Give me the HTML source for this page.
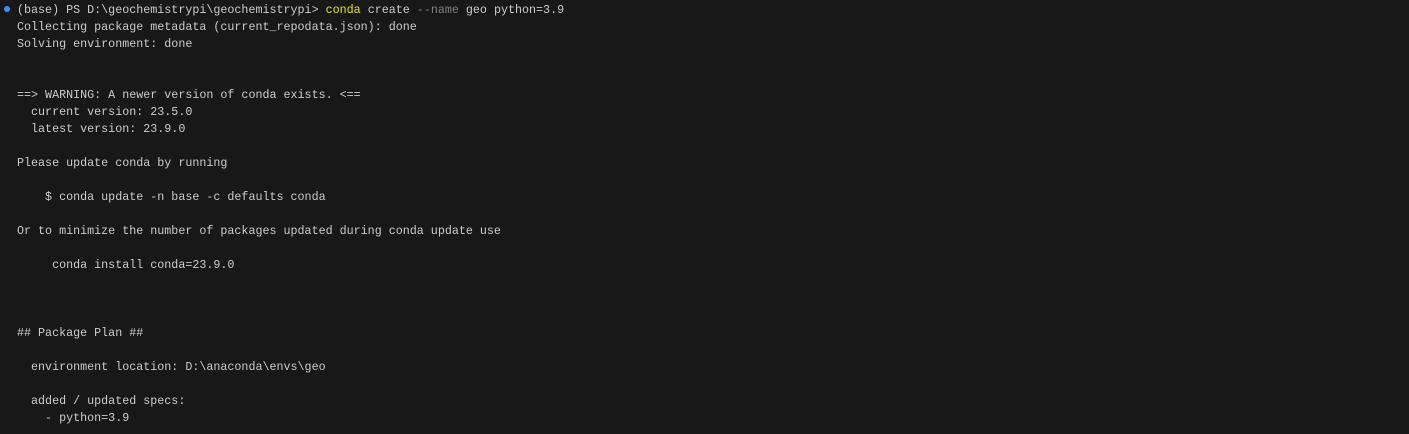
<!DOCTYPE html>
<html><head><style>
html,body{margin:0;padding:0;background:#181818;width:1409px;height:434px;overflow:hidden}
pre{margin:0;position:absolute;left:17px;top:2px;font-family:"Liberation Mono",monospace;font-size:11.7px;line-height:17px;color:#cccccc;white-space:pre}
.y{color:#e5e510}.d{color:#7f7f7f}
.dot{position:absolute;left:4px;top:6px;width:6px;height:6px;border-radius:50%;background:#3794ff}
</style></head><body>
<div class="dot"></div>
<pre>(base) PS D:\geochemistrypi\geochemistrypi&gt; <span class="y">conda</span> create <span class="d">--name</span> geo python=3.9
Collecting package metadata (current_repodata.json): done
Solving environment: done


==&gt; WARNING: A newer version of conda exists. &lt;==
  current version: 23.5.0
  latest version: 23.9.0

Please update conda by running

    $ conda update -n base -c defaults conda

Or to minimize the number of packages updated during conda update use

     conda install conda=23.9.0



## Package Plan ##

  environment location: D:\anaconda\envs\geo

  added / updated specs:
    - python=3.9</pre>
</body></html>
